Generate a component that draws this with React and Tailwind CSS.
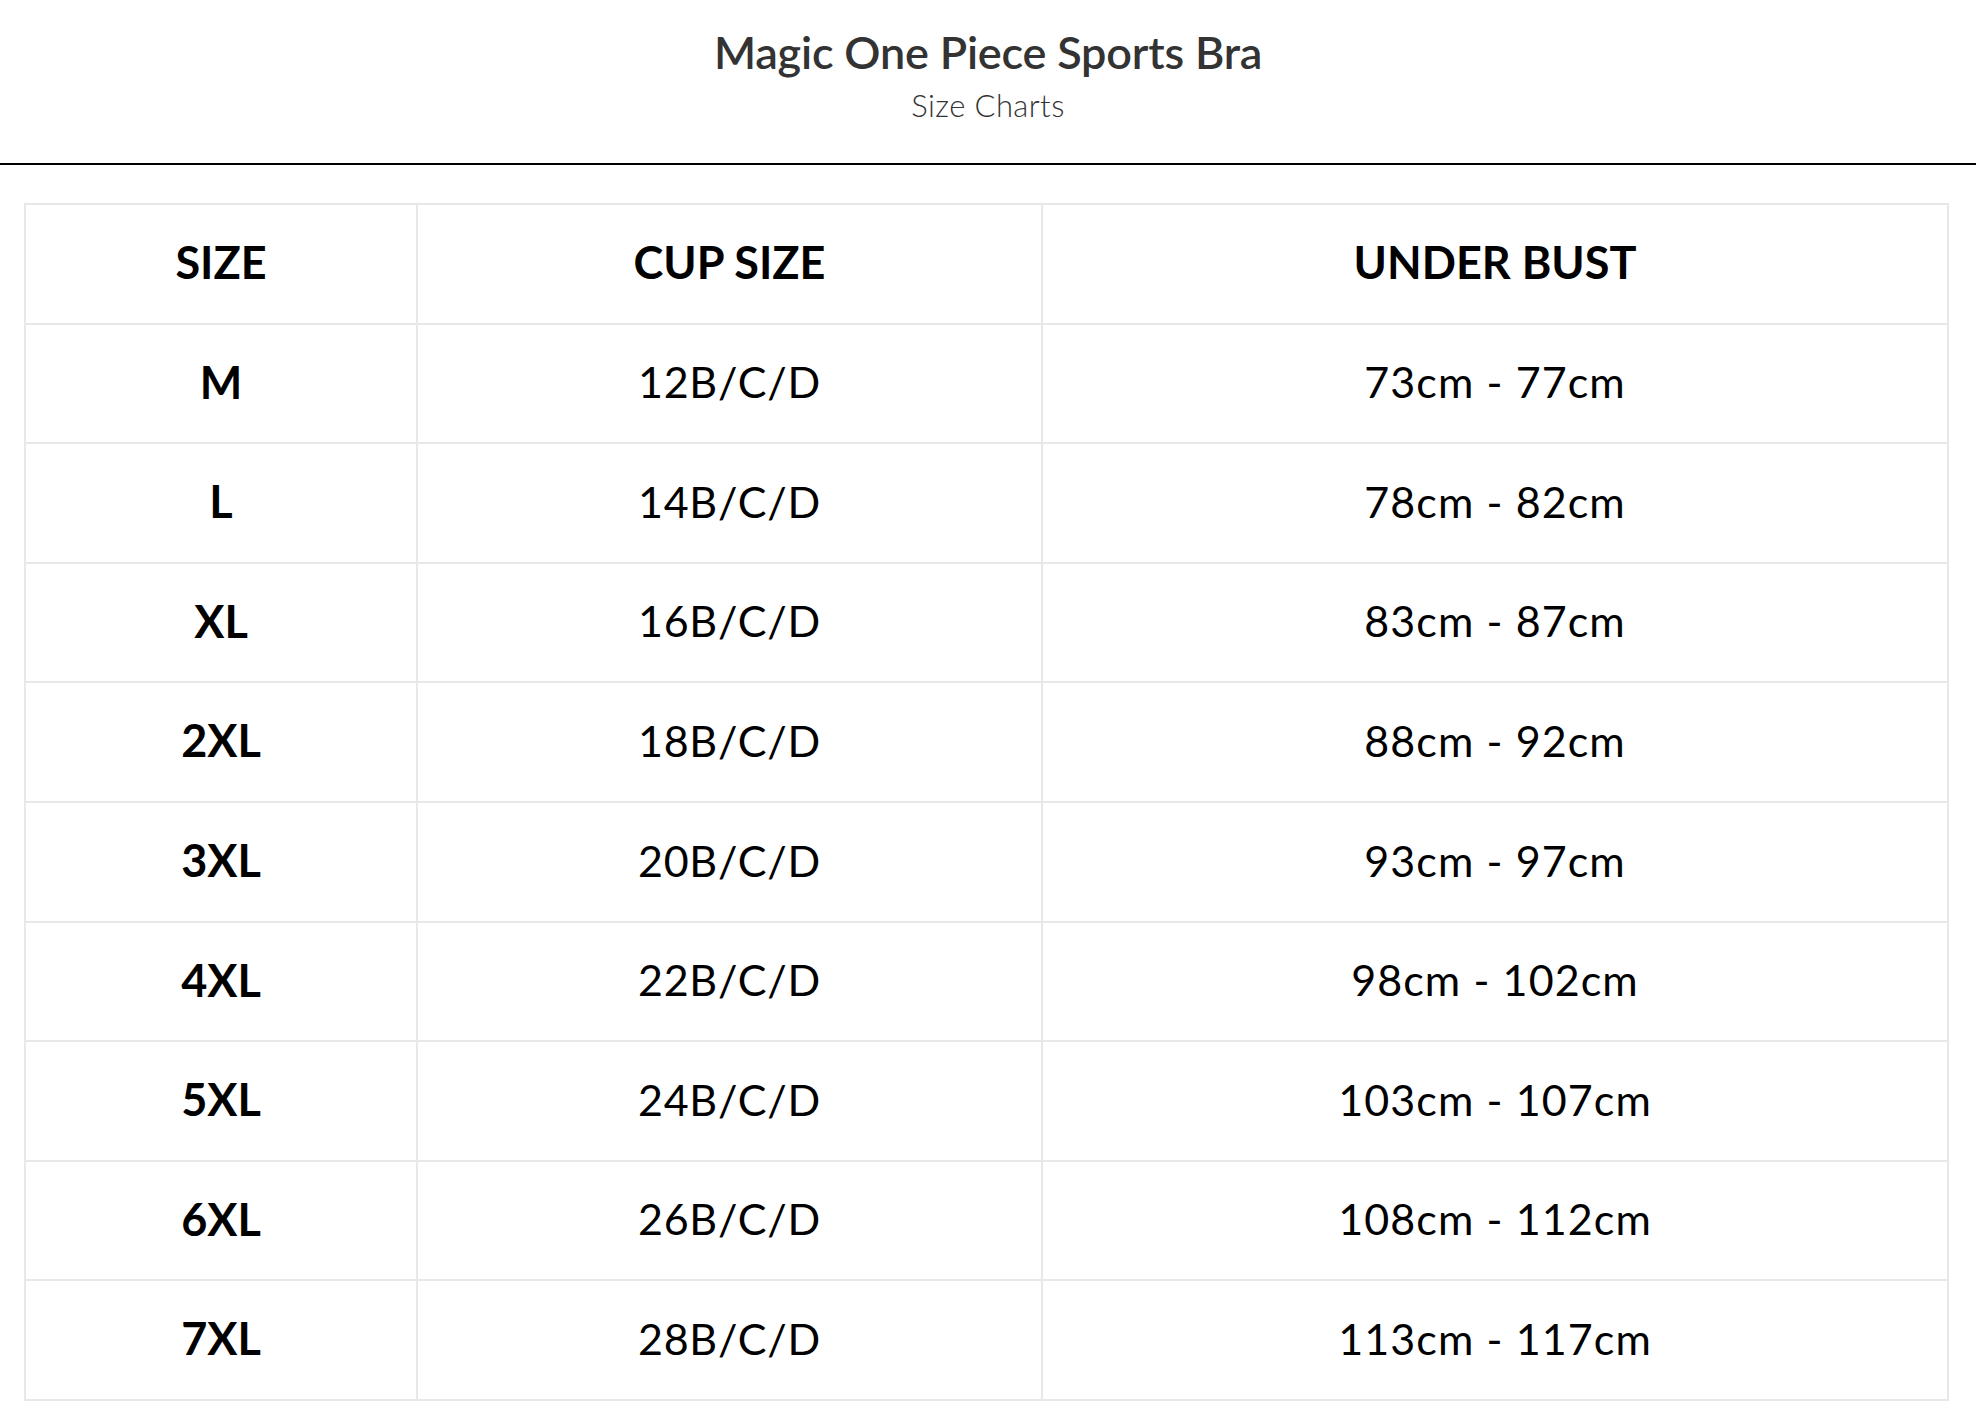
import React from "react";

const rows = [
  ["M", "12B/C/D", "73cm - 77cm"],
  ["L", "14B/C/D", "78cm - 82cm"],
  ["XL", "16B/C/D", "83cm - 87cm"],
  ["2XL", "18B/C/D", "88cm - 92cm"],
  ["3XL", "20B/C/D", "93cm - 97cm"],
  ["4XL", "22B/C/D", "98cm - 102cm"],
  ["5XL", "24B/C/D", "103cm - 107cm"],
  ["6XL", "26B/C/D", "108cm - 112cm"],
  ["7XL", "28B/C/D", "113cm - 117cm"],
];

const cell =
  "flex items-center justify-center border-b-2 border-r-2 border-[#e8e8e8] pb-[2px]";

export default function App() {
  return (
    <div className="min-h-[1420px] w-[1976px] bg-white font-['Lato','Liberation_Sans',sans-serif] text-black">
      <header className="flex h-[163px] flex-col items-center pt-[22px]">
        <h1 className="text-[45px] font-semibold leading-[60px] tracking-[-0.2px] text-[#333333]">
          Magic One Piece Sports Bra
        </h1>
        <p className="mt-[3px] text-[31px] font-light leading-[40px] tracking-[0.4px] text-[#333333]">
          Size Charts
        </p>
      </header>
      <div className="h-[2px] w-full bg-black" />
      <div className="pl-[24px] pr-[27px] pt-[38px]">
        <div className="grid h-[1198px] grid-cols-[392px_625px_1fr] grid-rows-[repeat(10,1fr)] border-l-2 border-t-2 border-[#e8e8e8]">
          {["SIZE", "CUP SIZE", "UNDER BUST"].map((h) => (
            <div key={h} className={`${cell} text-[45px] font-bold`}>
              {h}
            </div>
          ))}
          {rows.map((r) => (
            <React.Fragment key={r[0]}>
              <div className={`${cell} text-[45px] font-bold`}>{r[0]}</div>
              <div className={`${cell} text-[43px] font-normal tracking-[0.8px]`}>{r[1]}</div>
              <div className={`${cell} text-[43px] font-normal tracking-[1.1px]`}>{r[2]}</div>
            </React.Fragment>
          ))}
        </div>
      </div>
    </div>
  );
}
